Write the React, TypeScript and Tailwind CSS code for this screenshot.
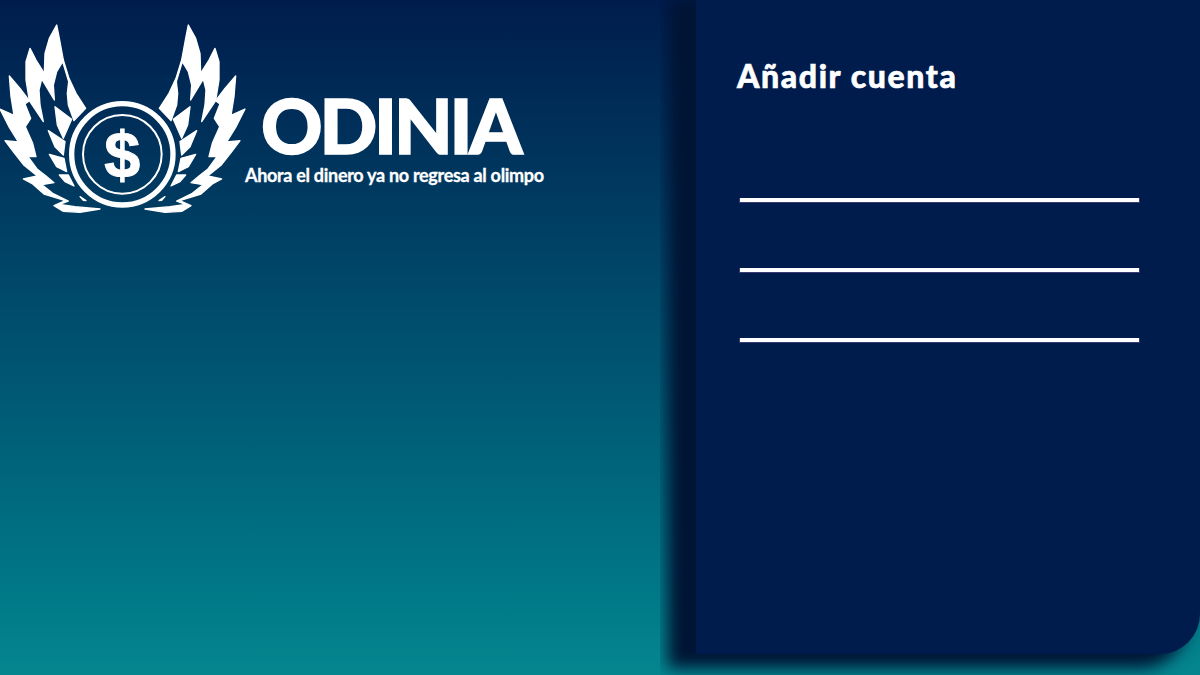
const feathers = [
    "170,45 178,85 190,150 207,205 228,250 257,295 222,332 205,285 202,250 206,215 188,155 170,185 160,225 163,270 125,207 133,190 135,130 148,85",
    "90,115 108,150 133,190 125,207 117,240 120,285 130,335 88,272 78,210 78,155",
    "28,198 60,235 88,272 75,282 92,325 76,350 98,400 108,440 84,440 112,478 138,498 162,518 126,524 158,550 205,573 178,583 225,590 300,597 240,607 190,604 162,587 196,572 132,552 98,522 70,507 112,498 72,466 42,428 15,392 55,396 28,352 0,297 42,316 33,260",
    "165,290 215,328 190,385 172,345",
    "145,362 195,395 190,435 165,410",
    "148,433 192,445 200,485 170,470",
    "178,495 205,495 222,528 195,515",
    "240,560 258,572 250,571",
];

function Logo() {
    return (
        <svg viewBox="0 0 780 630" className="w-[260px] h-[210px] shrink-0 text-white">
            <g fill="currentColor" stroke="currentColor" strokeWidth="4" strokeLinejoin="round">
                {feathers.map((points, i) => (
                    <polygon key={i} points={points} />
                ))}
            </g>
            <g fill="currentColor" stroke="currentColor" strokeWidth="4" strokeLinejoin="round" transform="translate(735 0) scale(-1 1)">
                {feathers.map((points, i) => (
                    <polygon key={i} points={points} />
                ))}
            </g>
            <circle cx="367" cy="433" r="152" fill="none" stroke="currentColor" strokeWidth="16" />
            <circle cx="367" cy="433" r="118" fill="none" stroke="currentColor" strokeWidth="6" />
            <text x="367" y="502" textAnchor="middle" fontSize="194" fontWeight="700" fontFamily="'Liberation Sans', sans-serif" fill="currentColor" stroke="currentColor" strokeWidth="3">$</text>
        </svg>
    );
}

export default function App() {
    return (
        <div className="w-[1200px] h-[675px] flex overflow-hidden bg-gradient-to-b from-[#001c4d] to-[#05868f] text-white font-['Lato',sans-serif]">
            {/* Logo side */}
            <div className="w-[660px] shrink-0 flex items-start pt-[10px]">
                <Logo />
                <div className="flex flex-col items-start pt-[84px] -ml-[15px]">
                    <h1 className="ml-[16px] text-[76px] leading-[62px] font-black tracking-[-3.2px] [-webkit-text-stroke:1.5px_white]">ODINIA</h1>
                    <p className="mt-[9px] text-[18px] leading-[20px] font-bold tracking-[-0.3px] whitespace-nowrap [-webkit-text-stroke:0.3px_white]">Ahora el dinero ya no regresa al olimpo</p>
                </div>
            </div>

            {/* Form side */}
            <div className="flex-1 overflow-hidden pl-[36px] pb-[21px]">
                <div className="h-full bg-[#001c4d] rounded-br-[40px] pl-[41px] pr-[60px] pt-[55px] shadow-[-20px_6px_16px_8px_#001535]">
                    <h2 className="text-[32px] leading-[42px] font-black tracking-[1.6px] [-webkit-text-stroke:0.6px_white]">Añadir cuenta</h2>
                    <div className="flex flex-col gap-[65px] mt-[101px] pl-[2px]">
                        <div className="h-[5px] bg-white border-b border-x border-[#3a3a70]" />
                        <div className="h-[5px] bg-white border-b border-x border-[#3a3a70]" />
                        <div className="h-[5px] bg-white border-b border-x border-[#3a3a70]" />
                    </div>
                </div>
            </div>
        </div>
    );
}
